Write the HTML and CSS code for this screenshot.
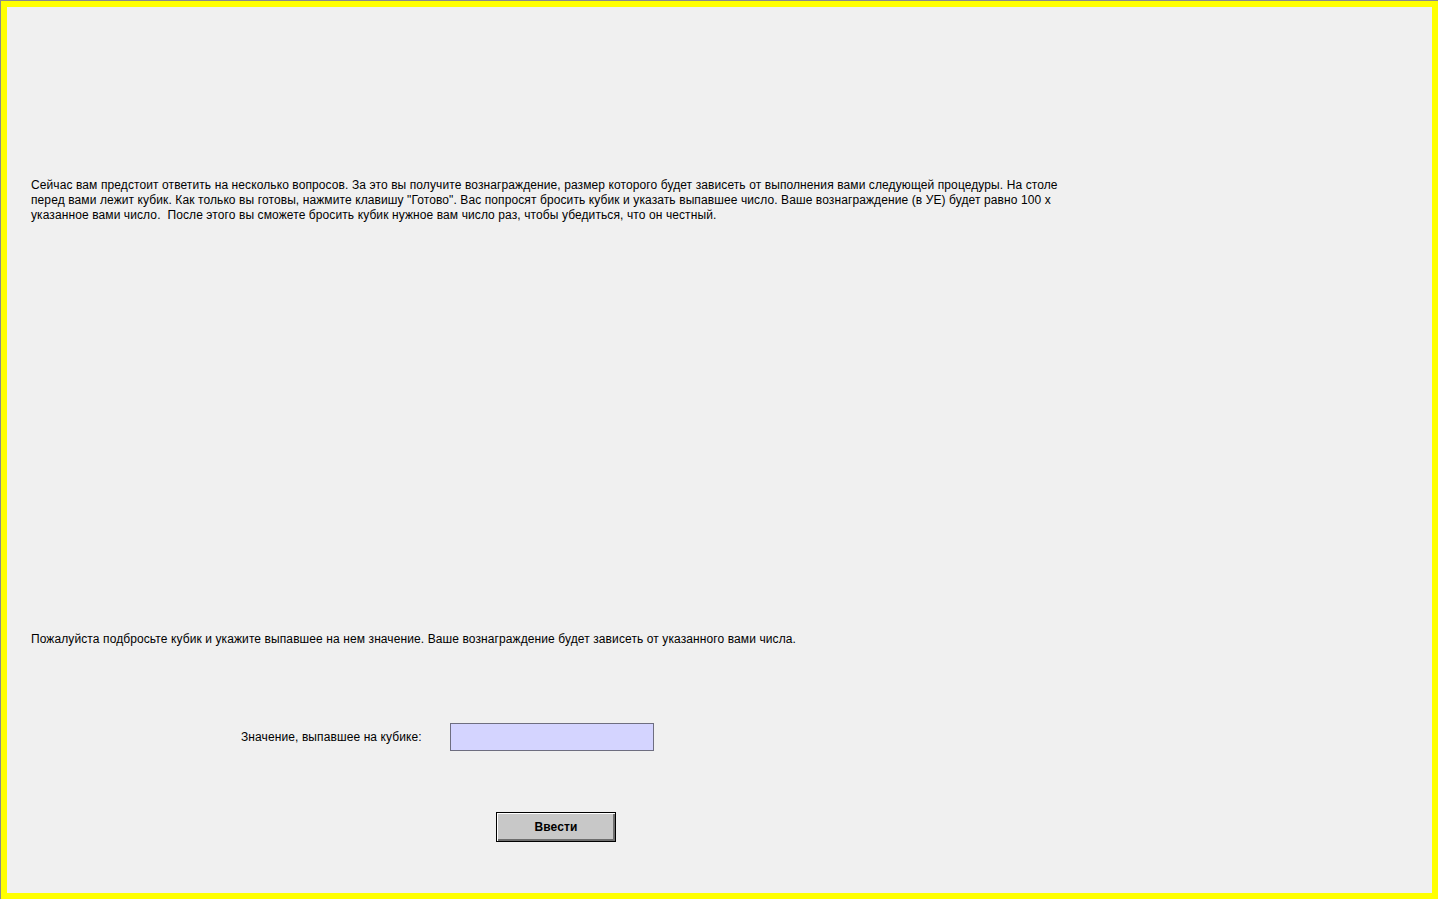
FILE: index.html
```html
<!DOCTYPE html>
<html lang="ru">
<head>
<meta charset="utf-8">
<title>Кубик</title>
<link rel="stylesheet" href="styles.css">
</head>
<body>
<div class="frame">
  <div class="content">
    <p class="intro">Сейчас вам предстоит ответить на несколько вопросов. За это вы получите вознаграждение, размер которого будет зависеть от выполнения вами следующей процедуры. На столе перед вами лежит кубик. Как только вы готовы, нажмите клавишу "Готово". Вас попросят бросить кубик и указать выпавшее число. Ваше вознаграждение (в УЕ) будет равно 100 x указанное вами число.&nbsp; После этого вы сможете бросить кубик нужное вам число раз, чтобы убедиться, что он честный.</p>
    <p class="prompt">Пожалуйста подбросьте кубик и укажите выпавшее на нем значение. Ваше вознаграждение будет зависеть от указанного вами числа.</p>
    <div class="field-row">
      <label class="field-label" for="val">Значение, выпавшее на кубике:</label>
      <input class="field-input" id="val" type="text">
    </div>
    <div class="button-row">
      <button class="btn" type="button">Ввести</button>
    </div>
  </div>
</div>
</body>
</html>
```
FILE: styles.css
```css
html, body {
  margin: 0;
  padding: 0;
  background: #ffffff;
}
body {
  width: 1440px;
  height: 900px;
  overflow: hidden;
  font-family: "Liberation Sans", Arial, sans-serif;
  font-size: 12px;
  letter-spacing: 0.1px;
  color: #000;
}
.frame {
  box-sizing: border-box;
  width: 1438px;
  height: 899px;
  border-top: 1px solid #8a8a8a;
  border-left: 1px solid #8a8a8a;
  background: #8a8a8a;
}
.content {
  box-sizing: border-box;
  width: 100%;
  height: 100%;
  border: 6px solid #ffff00;
  background: #f0f0f0;
  padding: 0 0 0 24px;
  display: flow-root;
}
.intro {
  margin: 171px 0 0 0;
  width: 1045px;
  line-height: 15px;
}
.prompt {
  margin: 409px 0 0 0;
  line-height: 15px;
}
.field-row {
  display: flex;
  align-items: center;
  margin-top: 76px;
  padding-left: 210px;
}
.field-label {
  width: 209px;
  line-height: 15px;
}
.field-input {
  box-sizing: border-box;
  width: 204px;
  height: 28px;
  margin: 0;
  border: 1px solid #6e6e80;
  background: #d4d4ff;
  font: inherit;
  padding: 0 4px;
  outline: none;
}
.button-row {
  margin-top: 61px;
  padding-left: 465px;
}
.btn {
  box-sizing: border-box;
  width: 120px;
  height: 30px;
  margin: 0;
  padding: 0;
  border: 1px solid #000;
  background: #c8c8c8;
  box-shadow: inset 1px 1px 0 #ffffff, inset -2px -2px 0 #6e6e6e;
  font-family: "Liberation Sans", Arial, sans-serif;
  font-size: 12px;
  font-weight: bold;
  letter-spacing: 0.1px;
  color: #000;
}
```
